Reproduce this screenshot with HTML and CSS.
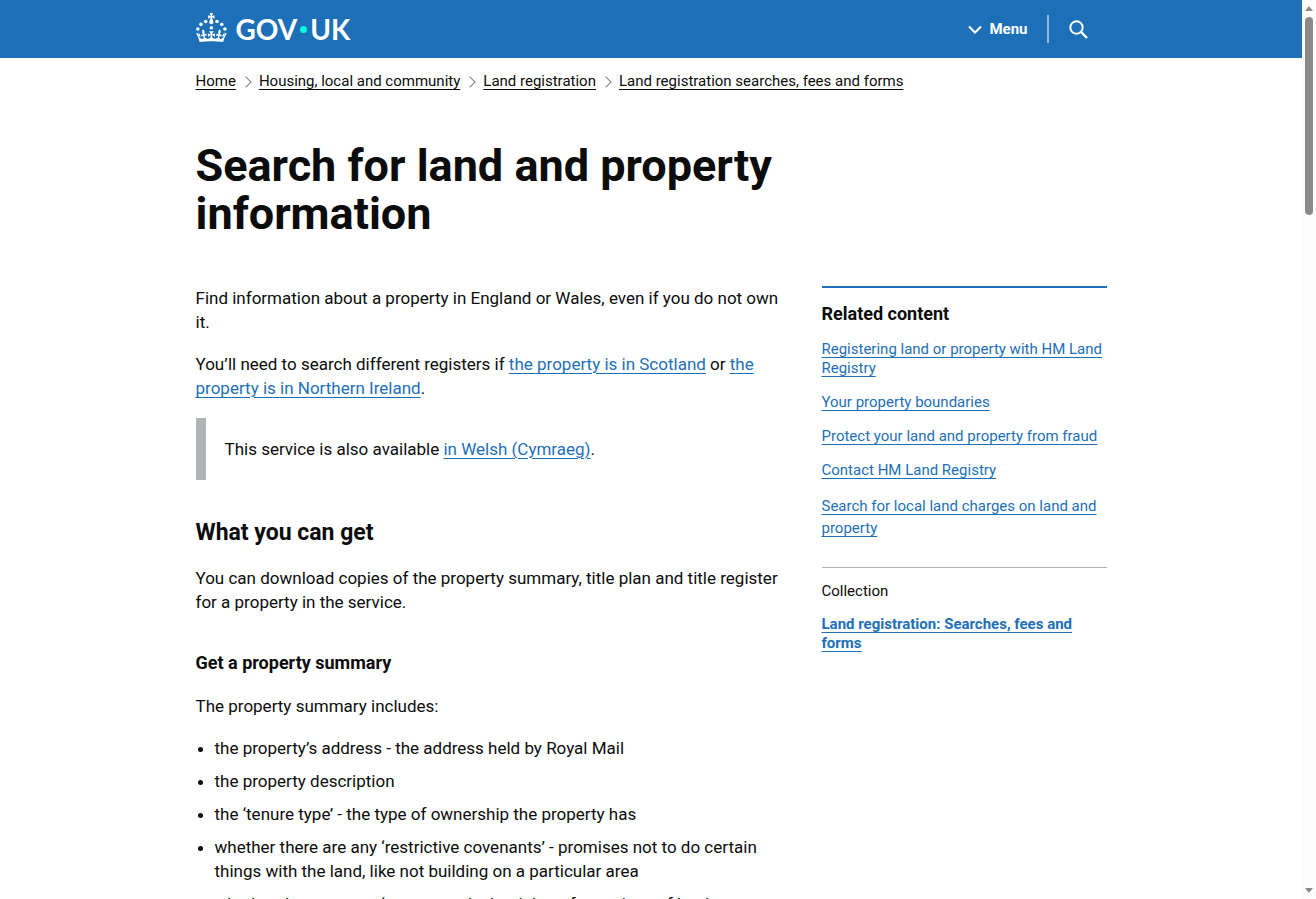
FILE: index.html
```html
<!DOCTYPE html>
<html lang="en">
<head>
    <meta charset="UTF-8">
    <meta name="viewport" content="width=device-width, initial-scale=1.0">
    <title>Search for land and property information - GOV.UK</title>
    <link rel="stylesheet" href="styles.css">
</head>
<body>
    <div class="page">
        <header class="header">
            <div class="container header-row">
                <a class="logo" href="#" aria-label="GOV.UK">
                    <svg class="crown" viewBox="0 0 64 60" fill="currentColor" aria-hidden="true">
                        <circle cx="20" cy="17.6" r="3.7"/>
                        <circle cx="10.2" cy="23.5" r="3.7"/>
                        <circle cx="3.7" cy="33.2" r="3.7"/>
                        <circle cx="31.7" cy="30.6" r="3.7"/>
                        <circle cx="43.3" cy="17.6" r="3.7"/>
                        <circle cx="53.2" cy="23.5" r="3.7"/>
                        <circle cx="59.7" cy="33.2" r="3.7"/>
                        <path d="M33.1,9.8c.2-.1.3-.3.5-.5l4.6,2.4v-6.8l-4.6,1.5c-.1-.2-.3-.3-.5-.5l1.9-5.9h-6.7l1.9,5.9c-.2.1-.3.3-.5.5l-4.6-1.5v6.8l4.6-2.4c.1.2.3.3.5.5l-2.6,8c-.9,2.8,1.2,5.7,4.1,5.7h0c3,0,5.1-2.9,4.1-5.7l-2.6-8ZM37,37.9s-3.4,3.8-4.1,6.1c2.2,0,4.2-.5,6.4-2.8l-.7,8.5c-2-2.8-4.4-4.1-5.7-3.8.1,3.1.5,6.7,5.8,7.2,3.7.3,6.7-1.5,7-3.8.4-2.6-2-4.3-3.7-1.6-1.4-4.5,2.4-6.1,4.9-3.2-1.9-4.5-1.8-7.7,2.4-10.9,3,4,2.6,7.3-1.2,11.1,2.4-1.3,6.2,0,4,4.6-1.2-2.8-3.7-2.2-4.2.2-.3,1.7.7,3.7,3,4.2,1.9.3,4.7-.9,7-5.9-1.3,0-2.4.7-3.9,1.7l2.4-8c.6,2.3,1.4,3.7,2.2,4.5.6-1.6.5-2.8,0-5.3l5,1.8c-2.6,3.6-5.2,8.7-7.3,17.5-7.4-1.1-15.7-1.7-24.5-1.7h0c-8.8,0-17.1.6-24.5,1.7-2.1-8.9-4.7-13.9-7.3-17.5l5-1.8c-.5,2.5-.6,3.7,0,5.3.8-.8,1.6-2.3,2.2-4.5l2.4,8c-1.5-1-2.6-1.7-3.9-1.7,2.3,5,5.2,6.2,7,5.9,2.3-.4,3.3-2.4,3-4.2-.5-2.4-3-3.1-4.2-.2-2.2-4.6,1.6-6,4-4.6-3.7-3.7-4.2-7.1-1.2-11.1,4.2,3.2,4.3,6.4,2.4,10.9,2.5-2.8,6.3-1.3,4.9,3.2-1.8-2.7-4.1-1-3.7,1.6.3,2.3,3.3,4.1,7,3.8,5.4-.5,5.7-4.2,5.8-7.2-1.3-.2-3.7,1-5.7,3.8l-.7-8.5c2.2,2.3,4.2,2.7,6.4,2.8-.7-2.3-4.1-6.1-4.1-6.1h10.6,0Z"/>
                    </svg>
                    <span class="wordmark">GOV<i class="dot"></i>UK</span>
                </a>
                <nav class="header-nav" aria-label="Menu">
                    <button class="menu-button" type="button">
                        <svg class="chevron-down" viewBox="0 0 14 9" aria-hidden="true"><path d="M1 1.5l6 6 6-6" fill="none" stroke="currentColor" stroke-width="2"/></svg>
                        Menu
                    </button>
                    <button class="search-button" type="button" aria-label="Search GOV.UK">
                        <svg class="search-icon" viewBox="0 0 19 19" fill="none" stroke="currentColor" stroke-width="2" aria-hidden="true"><circle cx="7.5" cy="7.5" r="6.2"/><path d="M12 12l6 6" stroke-width="2.4"/></svg>
                    </button>
                </nav>
            </div>
        </header>

        <div class="container">
            <nav aria-label="Breadcrumb">
                <ol class="breadcrumbs">
                    <li><a href="#">Home</a></li>
                    <li><a href="#">Housing, local and community</a></li>
                    <li><a href="#">Land registration</a></li>
                    <li><a href="#">Land registration searches, fees and forms</a></li>
                </ol>
            </nav>

            <div class="columns">
                <h1>Search for land and property information</h1>
                <main class="content">
                    <p>Find information about a property in England or Wales, even if you do not own it.</p>
                    <p>You’ll need to search different registers if <a href="#">the property is in Scotland</a> or <a href="#">the property is in Northern Ireland</a>.</p>
                    <div class="inset">
                        <p>This service is also available <a href="#">in Welsh (Cymraeg)</a>.</p>
                    </div>
                    <h2>What you can get</h2>
                    <p>You can download copies of the property summary, title plan and title register for a property in the service.</p>
                    <h3>Get a property summary</h3>
                    <p>The property summary includes:</p>
                    <ul>
                        <li>the property’s address - the address held by Royal Mail</li>
                        <li>the property description</li>
                        <li>the ‘tenure type’ - the type of ownership the property has</li>
                        <li>whether there are any ‘restrictive covenants’ - promises not to do certain things with the land, like not building on a particular area</li>
                        <li>whether there are any ‘easements’ - the rights of one piece of land</li>
                    </ul>
                </main>

                <aside class="related">
                    <h2>Related content</h2>
                    <ul>
                        <li><a href="#">Registering land or property with HM Land Registry</a></li>
                        <li><a href="#">Your property boundaries</a></li>
                        <li><a href="#">Protect your land and property from fraud</a></li>
                        <li><a href="#">Contact HM Land Registry</a></li>
                        <li class="external"><a href="#">Search for local land charges on land and property</a></li>
                    </ul>
                    <div class="collection">
                        <h3>Collection</h3>
                        <a href="#">Land registration: Searches, fees and forms</a>
                    </div>
                </aside>
            </div>
        </div>
    </div>

    <div class="scrollbar" aria-hidden="true">
        <svg class="arrow" viewBox="0 0 8 5"><path d="M4 0l4 5H0z" fill="#8b8b8b"/></svg>
        <div class="thumb"></div>
        <svg class="arrow" viewBox="0 0 8 5"><path d="M4 5L0 0h8z" fill="#8b8b8b"/></svg>
    </div>
</body>
</html>
```
FILE: styles.css
```css
* { box-sizing: border-box; }
body {
    display: flex;
    height: 100vh;
    margin: 0;
    overflow: hidden;
    background-color: #fff;
    color: #0b0c0c;
    font: 17px/24px Roboto, Arial, sans-serif;
}
h1, h2, h3, p, ul, ol { margin: 0; padding: 0; }
a { color: #1d70b8; text-decoration: underline; text-decoration-thickness: 1px; text-underline-offset: 3px; }
svg { display: block; }
button { display: flex; align-items: center; padding: 0; border: none; background: none; color: #fff; cursor: pointer; }

.page { flex: 1; min-width: 0; overflow: hidden; }
.container { max-width: 911px; margin: 0 auto; }

/* Header */
.header { background-color: #1d70b8; color: #fff; }
.header-row { display: flex; justify-content: space-between; align-items: center; height: 58px; }
.logo { display: flex; align-items: center; gap: 9px; color: #fff; text-decoration: none; }
.crown { width: 31px; height: 29px; margin-bottom: 4px; }
.wordmark { display: flex; align-items: center; font: bold 28px/32px Lato, sans-serif; }
.dot { width: 7px; height: 7px; margin: 0 3px; border-radius: 50%; background-color: #00ffe0; }
.header-nav { display: flex; align-items: center; }
.menu-button { gap: 7px; height: 28px; padding-right: 19px; border-right: 2px solid #8eb8dc; font: bold 15px Roboto, Arial, sans-serif; }
.chevron-down { width: 14px; height: 9px; }
.search-button { padding: 0 19px 0 20px; }
.search-icon { width: 19px; height: 19px; }

/* Breadcrumbs */
.breadcrumbs { display: flex; flex-wrap: wrap; padding: 14px 0 0; list-style: none; font-size: 15px; line-height: 19px; }
.breadcrumbs li { display: flex; align-items: center; }
.breadcrumbs a { color: #0b0c0c; }
.breadcrumbs li + li::before {
    content: "";
    width: 7px;
    height: 7px;
    margin: 0 9px 0 6px;
    border: solid #7b7f82;
    border-width: 1px 1px 0 0;
    transform: rotate(45deg);
}

/* Main columns */
.columns { display: grid; grid-template-columns: minmax(0, 1fr) 285px; column-gap: 28px; padding-top: 51px; }
h1 { grid-column: 1; margin-bottom: 48px; font-size: 45px; line-height: 48px; }
.content { grid-column: 1; }
.content p { margin-bottom: 18px; }
.content .inset { margin-bottom: 38px; padding: 19px; border-left: 10px solid #b1b4b6; }
.content .inset p { margin: 0; }
.content h2 { margin-bottom: 19px; font-size: 23px; line-height: 29px; }
.content h3 { margin: 37px 0 19px; font-size: 18px; line-height: 24px; }
.content ul { padding-left: 19px; }
.content li { margin-bottom: 9px; }

/* Related content */
.related { grid-column: 2; border-top: 2px solid #1d70b8; font-size: 15px; line-height: 19px; }
.related h2 { margin: 14px 0; font-size: 18px; line-height: 24px; }
.related ul { list-style: none; }
.related li { margin-bottom: 15px; }
.related .external { margin-bottom: 28px; line-height: 22px; }
.collection { padding-top: 14px; border-top: 1px solid #b1b4b6; }
.collection h3 { margin-bottom: 14px; font-size: 15px; font-weight: normal; }
.collection a { font-weight: bold; }

/* Scrollbar */
.scrollbar { display: flex; flex-direction: column; align-items: center; width: 14px; padding: 6px 0; background-color: #fcfcfc; }
.arrow { width: 8px; height: 5px; }
.thumb { width: 8px; height: 198px; margin: 6px 0 auto; border-radius: 4px; background-color: #8b8b8b; }
```
